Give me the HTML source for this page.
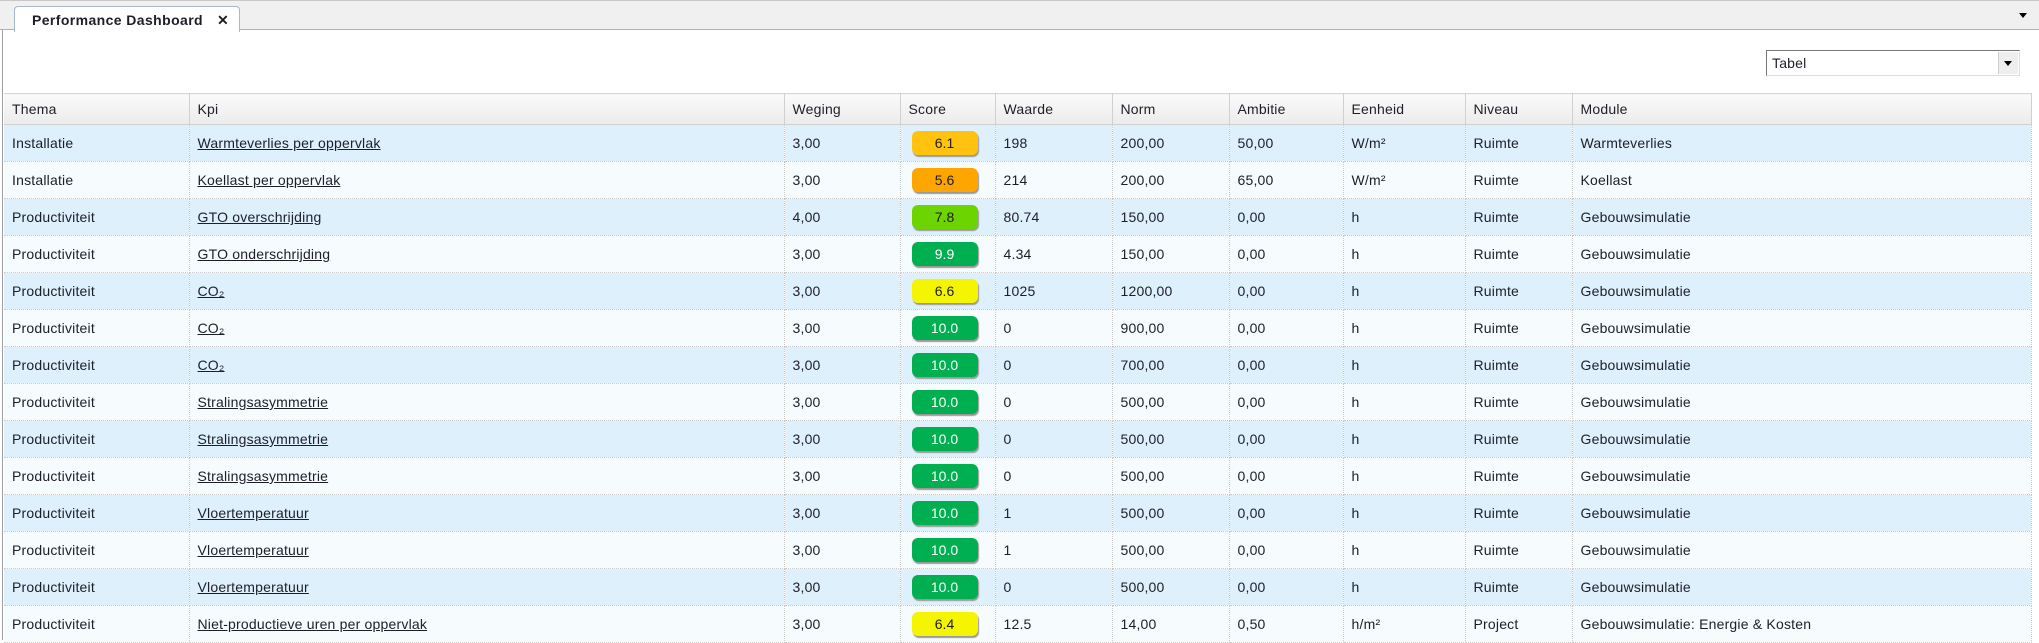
<!DOCTYPE html>
<html><head><meta charset="utf-8"><style>
body{margin:0;width:2039px;height:640px;overflow:hidden;background:#fff;font-family:"Liberation Sans",sans-serif;font-size:14px;letter-spacing:0.2px;color:#1e1e28;position:relative}
.tabbar{position:absolute;left:0;top:0;width:2039px;height:30px;background:#f0f0f0;border-top:1px solid #c8c8c8;border-bottom:1px solid #a0b4c8;box-sizing:border-box}
.tab{position:absolute;left:14px;top:5px;width:226px;height:26px;background:#fff;border:1px solid #a8b8c8;border-bottom:none;border-radius:4px 4px 0 0;box-sizing:border-box;font-weight:bold;font-size:14px;letter-spacing:0.4px;padding:5px 0 0 17px}
.tab b{margin-left:14px;font-size:14px}
.ddarrow{position:absolute;right:12px;top:12px;width:0;height:0;border-left:4px solid transparent;border-right:4px solid transparent;border-top:5px solid #000}
.leftline{position:absolute;left:2px;top:30px;width:1px;height:610px;background:#a0a0a0}
.combo{position:absolute;left:1766px;top:50px;width:254px;height:26px;border:1px solid #777;border-right-color:#ddd;border-bottom-color:#ddd;box-sizing:border-box;background:#fff;padding:4px 0 0 5px;font-size:14px}
.combo .btn{position:absolute;right:1px;top:1px;width:19px;height:22px;background:#eee;border-left:1px solid #ccc}
.combo .btn:after{content:"";position:absolute;left:5px;top:9px;border-left:4px solid transparent;border-right:4px solid transparent;border-top:5px solid #000}
table{position:absolute;left:4px;top:93px;border-collapse:collapse;table-layout:fixed;width:2028px}
th{height:30px;background:linear-gradient(#fafafa,#ebebeb);font-weight:normal;text-align:left;padding:0 0 0 8px;border-right:1px solid #d0d0d0;border-top:1px solid #d8d8d8;border-bottom:1px solid #d0d0d0}
td{height:36px;padding:0 0 0 8px;border-right:1px dotted #c8c8c8;border-bottom:1px dotted #c8c8c8;white-space:nowrap;overflow:hidden}
tr.a td{background:#ddf0fb}
tr.b td{background:#f6fbfe}
.s{display:inline-block;width:66px;height:24px;border-radius:6px;text-align:center;line-height:24px;font-size:14px;letter-spacing:0;margin-left:3px;box-shadow:1px 2px 1px #999;vertical-align:middle}
.o1{background:#ffc20e}.o2{background:#ffa500}.g1{background:#6cd400}.g2{background:#00b050;color:#fff}.y{background:#f5f500}
</style></head><body>
<div class="tabbar"><div class="tab">Performance Dashboard<b>✕</b></div><div class="ddarrow"></div></div>
<div class="leftline"></div>
<div class="combo">Tabel<div class="btn"></div></div>
<table>
<colgroup><col style="width:185px"><col style="width:595px"><col style="width:116px"><col style="width:95px"><col style="width:117px"><col style="width:117px"><col style="width:114px"><col style="width:122px"><col style="width:107px"><col></colgroup>
<tr><th>Thema</th><th>Kpi</th><th>Weging</th><th>Score</th><th>Waarde</th><th>Norm</th><th>Ambitie</th><th>Eenheid</th><th>Niveau</th><th>Module</th></tr>
<tr class="a"><td>Installatie</td><td><u>Warmteverlies per oppervlak</u></td><td>3,00</td><td><span class="s o1">6.1</span></td><td>198</td><td>200,00</td><td>50,00</td><td>W/m²</td><td>Ruimte</td><td>Warmteverlies</td></tr>
<tr class="b"><td>Installatie</td><td><u>Koellast per oppervlak</u></td><td>3,00</td><td><span class="s o2">5.6</span></td><td>214</td><td>200,00</td><td>65,00</td><td>W/m²</td><td>Ruimte</td><td>Koellast</td></tr>
<tr class="a"><td>Productiviteit</td><td><u>GTO overschrijding</u></td><td>4,00</td><td><span class="s g1">7.8</span></td><td>80.74</td><td>150,00</td><td>0,00</td><td>h</td><td>Ruimte</td><td>Gebouwsimulatie</td></tr>
<tr class="b"><td>Productiviteit</td><td><u>GTO onderschrijding</u></td><td>3,00</td><td><span class="s g2">9.9</span></td><td>4.34</td><td>150,00</td><td>0,00</td><td>h</td><td>Ruimte</td><td>Gebouwsimulatie</td></tr>
<tr class="a"><td>Productiviteit</td><td><u>CO₂</u></td><td>3,00</td><td><span class="s y">6.6</span></td><td>1025</td><td>1200,00</td><td>0,00</td><td>h</td><td>Ruimte</td><td>Gebouwsimulatie</td></tr>
<tr class="b"><td>Productiviteit</td><td><u>CO₂</u></td><td>3,00</td><td><span class="s g2">10.0</span></td><td>0</td><td>900,00</td><td>0,00</td><td>h</td><td>Ruimte</td><td>Gebouwsimulatie</td></tr>
<tr class="a"><td>Productiviteit</td><td><u>CO₂</u></td><td>3,00</td><td><span class="s g2">10.0</span></td><td>0</td><td>700,00</td><td>0,00</td><td>h</td><td>Ruimte</td><td>Gebouwsimulatie</td></tr>
<tr class="b"><td>Productiviteit</td><td><u>Stralingsasymmetrie</u></td><td>3,00</td><td><span class="s g2">10.0</span></td><td>0</td><td>500,00</td><td>0,00</td><td>h</td><td>Ruimte</td><td>Gebouwsimulatie</td></tr>
<tr class="a"><td>Productiviteit</td><td><u>Stralingsasymmetrie</u></td><td>3,00</td><td><span class="s g2">10.0</span></td><td>0</td><td>500,00</td><td>0,00</td><td>h</td><td>Ruimte</td><td>Gebouwsimulatie</td></tr>
<tr class="b"><td>Productiviteit</td><td><u>Stralingsasymmetrie</u></td><td>3,00</td><td><span class="s g2">10.0</span></td><td>0</td><td>500,00</td><td>0,00</td><td>h</td><td>Ruimte</td><td>Gebouwsimulatie</td></tr>
<tr class="a"><td>Productiviteit</td><td><u>Vloertemperatuur</u></td><td>3,00</td><td><span class="s g2">10.0</span></td><td>1</td><td>500,00</td><td>0,00</td><td>h</td><td>Ruimte</td><td>Gebouwsimulatie</td></tr>
<tr class="b"><td>Productiviteit</td><td><u>Vloertemperatuur</u></td><td>3,00</td><td><span class="s g2">10.0</span></td><td>1</td><td>500,00</td><td>0,00</td><td>h</td><td>Ruimte</td><td>Gebouwsimulatie</td></tr>
<tr class="a"><td>Productiviteit</td><td><u>Vloertemperatuur</u></td><td>3,00</td><td><span class="s g2">10.0</span></td><td>0</td><td>500,00</td><td>0,00</td><td>h</td><td>Ruimte</td><td>Gebouwsimulatie</td></tr>
<tr class="b"><td>Productiviteit</td><td><u>Niet-productieve uren per oppervlak</u></td><td>3,00</td><td><span class="s y">6.4</span></td><td>12.5</td><td>14,00</td><td>0,50</td><td>h/m²</td><td>Project</td><td>Gebouwsimulatie: Energie &amp; Kosten</td></tr>
</table>
</body></html>
